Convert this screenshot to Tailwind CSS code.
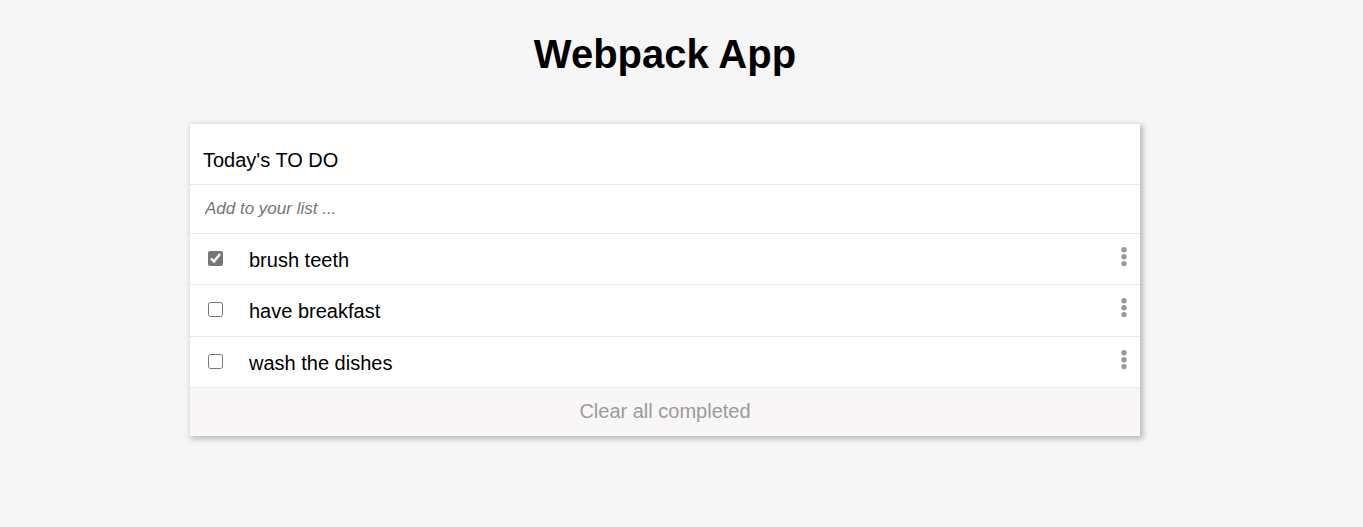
<!DOCTYPE html>
<html lang="en">
<head>
<meta charset="utf-8">
<title>Webpack App</title>
<script src="https://cdn.jsdelivr.net/npm/@tailwindcss/browser@4"></script>
</head>
<body class="min-h-screen bg-[#f6f6f6] pr-[33px] font-['Liberation_Sans',Arial,sans-serif] text-black">
<h1 class="pt-[30px] text-center text-[40px] leading-12 font-bold">Webpack App</h1>
<main class="mx-auto mt-[46px] w-5/7 bg-white shadow-[2px_2px_6px_1px_rgba(0,0,0,0.25)]">
<h2 class="border-b border-[#e9e9e9] px-[13px] pt-[22px] pb-[10px] text-[20px] leading-7">Today's TO DO</h2>
<form class="border-b border-[#e9e9e9]"><input type="text" aria-label="Add to your list" placeholder="Add to your list ..." class="block h-12 w-full px-[15px] text-[17px] italic outline-none placeholder:text-[#757575]"></form>
<ul class="grid min-h-[154px] auto-rows-fr text-[20px] leading-12">
<li class="flex items-start border-b border-[#e9e9e9] pr-3 pl-[18px]"><input id="a" type="checkbox" checked class="mt-[17px] size-[15px] accent-[#767676]"><label for="a" class="ml-[26px] flex-1 pt-[2px]">brush teeth</label><button type="button" aria-label="Options for brush teeth" class="mt-[13px]"><svg class="block h-5 w-2" viewBox="0 0 8 20" fill="#999"><circle cx="4" cy="2.7" r="2.7"/><circle cx="4" cy="9.7" r="2.7"/><circle cx="4" cy="16.6" r="2.7"/></svg></button></li>
<li class="flex items-start border-b border-[#e9e9e9] pr-3 pl-[18px]"><input id="b" type="checkbox" class="mt-[17px] size-[15px]"><label for="b" class="ml-[26px] flex-1 pt-[2px]">have breakfast</label><button type="button" aria-label="Options for have breakfast" class="mt-[13px]"><svg class="block h-5 w-2" viewBox="0 0 8 20" fill="#999"><circle cx="4" cy="2.7" r="2.7"/><circle cx="4" cy="9.7" r="2.7"/><circle cx="4" cy="16.6" r="2.7"/></svg></button></li>
<li class="flex items-start border-b border-[#e9e9e9] pr-3 pl-[18px]"><input id="c" type="checkbox" class="mt-[17px] size-[15px]"><label for="c" class="ml-[26px] flex-1 pt-[2px]">wash the dishes</label><button type="button" aria-label="Options for wash the dishes" class="mt-[13px]"><svg class="block h-5 w-2" viewBox="0 0 8 20" fill="#999"><circle cx="4" cy="2.7" r="2.7"/><circle cx="4" cy="9.7" r="2.7"/><circle cx="4" cy="16.6" r="2.7"/></svg></button></li>
</ul>
<button type="button" class="block h-12 w-full bg-[#f8f6f7] pb-[2px] text-[20px] text-[#9b9b9b]">Clear all completed</button>
</main>
</body>
</html>
